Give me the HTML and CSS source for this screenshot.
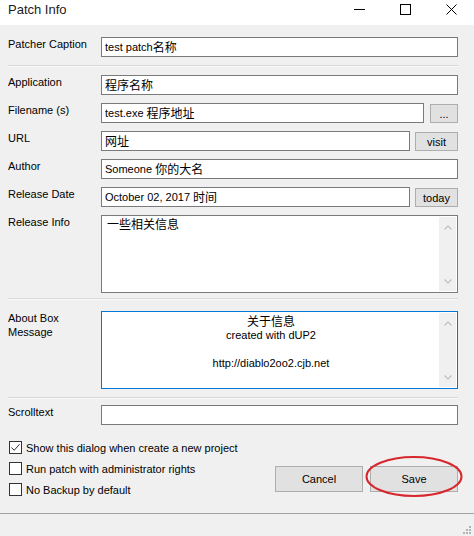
FILE: index.html
```
<!DOCTYPE html>
<html>
<head>
<meta charset="utf-8">
<title>Patch Info</title>
<link rel="stylesheet" href="styles.css">
</head>
<body>
<div class="window">
  <div class="titlebar">
    <span class="title">Patch Info</span>
    <div class="caption-btn"><svg width="11" height="11" viewBox="0 0 11 11"><path d="M0 5.5H11" stroke="#000" stroke-width="1"/></svg></div>
    <div class="caption-btn"><svg width="11" height="11" viewBox="0 0 11 11"><rect x="0.5" y="0.5" width="10" height="10" fill="none" stroke="#000" stroke-width="1"/></svg></div>
    <div class="caption-btn"><svg width="11" height="11" viewBox="0 0 11 11"><path d="M0.5 0.5L10.5 10.5M10.5 0.5L0.5 10.5" stroke="#000" stroke-width="1"/></svg></div>
  </div>

  <div class="content">
    <div class="row">
      <div class="label">Patcher Caption</div>
      <div class="input">test patch<span class="zh">名称</span></div>
    </div>
    <div class="sep"></div>

    <div class="row">
      <div class="label">Application</div>
      <div class="input"><span class="zh">程序名称</span></div>
    </div>
    <div class="row">
      <div class="label">Filename (s)</div>
      <div class="input">test.exe <span class="zh">程序地址</span></div>
      <button class="btn-small dots">...</button>
    </div>
    <div class="row">
      <div class="label">URL</div>
      <div class="input"><span class="zh">网址</span></div>
      <button class="btn-small">visit</button>
    </div>
    <div class="row">
      <div class="label">Author</div>
      <div class="input">Someone <span class="zh">你的大名</span></div>
    </div>
    <div class="row">
      <div class="label">Release Date</div>
      <div class="input">October 02, 2017 <span class="zh">时间</span></div>
      <button class="btn-small">today</button>
    </div>
    <div class="row">
      <div class="label">Release Info</div>
      <div class="textarea">
        <div class="ta-text"><span class="zh">一些相关信息</span></div>
        <div class="scrollbar">
          <svg width="8" height="5" viewBox="0 0 8 5"><path d="M0.5 4.5L4 1L7.5 4.5" fill="none" stroke="#bfbfbf" stroke-width="1.2"/></svg>
          <svg width="8" height="5" viewBox="0 0 8 5"><path d="M0.5 0.5L4 4L7.5 0.5" fill="none" stroke="#bfbfbf" stroke-width="1.2"/></svg>
        </div>
      </div>
    </div>
    <div class="sep sep-info"></div>

    <div class="row">
      <div class="label">About Box<br>Message</div>
      <div class="textarea focused">
        <div class="ta-text centered">
          <div class="zh">关于信息</div>
          <div>created with dUP2</div>
          <div>&nbsp;</div>
          <div>http://diablo2oo2.cjb.net</div>
        </div>
        <div class="scrollbar">
          <svg width="8" height="5" viewBox="0 0 8 5"><path d="M0.5 4.5L4 1L7.5 4.5" fill="none" stroke="#bfbfbf" stroke-width="1.2"/></svg>
          <svg width="8" height="5" viewBox="0 0 8 5"><path d="M0.5 0.5L4 4L7.5 0.5" fill="none" stroke="#bfbfbf" stroke-width="1.2"/></svg>
        </div>
      </div>
    </div>
    <div class="sep sep-about"></div>

    <div class="row">
      <div class="label">Scrolltext</div>
      <div class="input"></div>
    </div>

    <div class="options">
      <div class="checks">
        <div class="check-row">
          <span class="box"><svg width="11" height="11" viewBox="0 0 11 11"><path d="M1.5 5.5L4.2 8.3L9.6 2.2" fill="none" stroke="#333" stroke-width="1"/></svg></span>
          <span>Show this dialog when create a new project</span>
        </div>
        <div class="check-row">
          <span class="box"></span>
          <span>Run patch with administrator rights</span>
        </div>
        <div class="check-row">
          <span class="box"></span>
          <span>No Backup by default</span>
        </div>
      </div>
      <div class="buttons">
        <button class="btn">Cancel</button>
        <div class="save-wrap">
          <button class="btn">Save</button>
          <svg class="highlight" width="98" height="42" viewBox="0 0 98 42"><ellipse cx="49" cy="20.5" rx="47.5" ry="19.5" fill="none" stroke="#d7262c" stroke-width="2"/></svg>
        </div>
      </div>
    </div>
  </div>

  <div class="statusbar">
    <svg width="8" height="8" viewBox="0 0 8 8" fill="#b4b4b4">
      <rect x="6" y="0" width="2" height="2"/>
      <rect x="3" y="3" width="2" height="2"/>
      <rect x="6" y="3" width="2" height="2"/>
      <rect x="0" y="6" width="2" height="2"/>
      <rect x="3" y="6" width="2" height="2"/>
      <rect x="6" y="6" width="2" height="2"/>
    </svg>
  </div>
</div>
</body>
</html>
```

FILE: styles.css
```
* {
  box-sizing: border-box;
}

body {
  margin: 0;
  background: #f0f0f0;
  font-family: "Liberation Sans", Arial, "Noto Sans CJK SC", sans-serif;
  font-size: 11px;
  color: #000;
}

.window {
  width: 474px;
  height: 536px;
  display: flex;
  flex-direction: column;
  background: #f0f0f0;
  overflow: hidden;
}

.titlebar {
  height: 25px;
  flex: none;
  background: #fff;
  display: flex;
  align-items: flex-start;
  padding-left: 8px;
}

.title {
  flex: 1;
  font-size: 13px;
  line-height: 15px;
  padding-top: 2px;
  color: #1b1b1b;
}

.caption-btn {
  width: 46px;
  height: 19px;
  display: flex;
  align-items: center;
  justify-content: center;
}

.caption-btn svg {
  display: block;
}

.content {
  flex: 1;
  padding: 12px 16px 0 8px;
}

.row {
  display: flex;
  margin-bottom: 8px;
}

.label {
  width: 93px;
  flex: none;
  line-height: 14px;
  color: #000;
}

.zh {
  font-family: "Noto Sans CJK SC", sans-serif;
  font-size: 12px;
}

.input {
  flex: 1;
  height: 20px;
  border: 1px solid #7a7a7a;
  background: #fff;
  padding: 0 3px;
  display: flex;
  align-items: center;
  white-space: pre;
  line-height: 16px;
}

.btn-small {
  flex: none;
  width: 43px;
  height: 19px;
  margin: 1px 0 0 5px;
  background: #e1e1e1;
  border: 1px solid #adadad;
  font-family: inherit;
  font-size: 11px;
  color: #000;
  padding: 0;
}

.btn-small.dots {
  width: 28px;
  margin-left: 6px;
}

.textarea {
  flex: 1;
  height: 78px;
  border: 1px solid #7a7a7a;
  background: #fff;
  display: flex;
  padding: 1px;
}

.textarea.focused {
  border-color: #0078d7;
}

.ta-text {
  flex: 1;
  padding: 0 0 0 4px;
  line-height: 14px;
}

.ta-text.centered {
  text-align: center;
  padding: 1px 0 0 0;
}

.scrollbar {
  width: 17px;
  flex: none;
  background: #f0f0f0;
  display: flex;
  flex-direction: column;
  justify-content: space-between;
  align-items: center;
  padding: 8px 0 7px;
}

.scrollbar svg {
  display: block;
}

.sep {
  height: 2px;
  border-top: 1px solid #d7d7d7;
  border-bottom: 1px solid #fafafa;
  margin-bottom: 8px;
}

.sep.sep-info {
  margin-top: -3px;
  margin-bottom: 11px;
}

.sep.sep-about {
  margin-bottom: 6px;
}

.options {
  display: flex;
  justify-content: space-between;
  margin-top: 12px;
}

.checks {
  display: flex;
  flex-direction: column;
  padding-left: 1px;
}

.check-row {
  height: 21px;
  display: flex;
  align-items: center;
  gap: 4px;
}

.box {
  width: 13px;
  height: 13px;
  border: 1px solid #333;
  background: #fff;
  display: flex;
  align-items: center;
  justify-content: center;
}

.box svg {
  display: block;
}

.buttons {
  display: flex;
  gap: 7px;
  margin-top: 29px;
  align-self: flex-start;
}

.btn {
  width: 88px;
  height: 26px;
  background: #e1e1e1;
  border: 1px solid #adadad;
  font-family: inherit;
  font-size: 11px;
  color: #000;
  padding: 0;
}

.save-wrap {
  position: relative;
}

.highlight {
  position: absolute;
  left: -5px;
  top: -10px;
  pointer-events: none;
}

.statusbar {
  height: 23px;
  flex: none;
  border-top: 1px solid #a3a3a3;
  display: flex;
  justify-content: flex-end;
  align-items: flex-end;
  padding: 0 3px 2px 0;
}

.statusbar svg {
  display: block;
}
```
